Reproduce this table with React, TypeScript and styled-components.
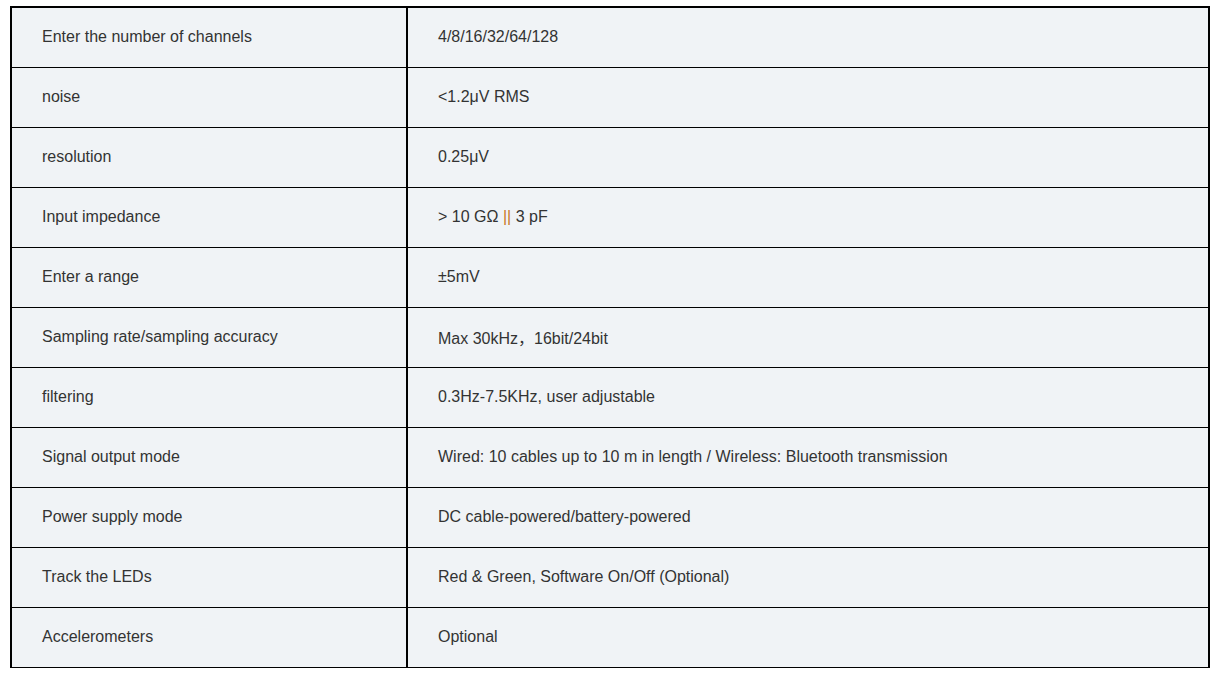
import React from "react";
import styled, { createGlobalStyle } from "styled-components";

const GlobalStyle = createGlobalStyle`
  body {
    margin: 0;
    background: #ffffff;
    font-family: "Liberation Sans", Arial, "Noto Sans CJK SC", sans-serif;
  }
`;

const Page = styled.div`
  padding: 6px 0 0 10px;
`;

const SpecTable = styled.div`
  box-sizing: border-box;
  width: 1200px;
  display: grid;
  grid-template-columns: 396px 1fr;
  background: #f0f3f6;
  border-top: 2px solid #000;
  border-left: 2px solid #000;
  border-right: 2px solid #000;
`;

const Cell = styled.div<{ first?: boolean }>`
  box-sizing: border-box;
  height: 60px;
  display: flex;
  align-items: center;
  padding: 0 0 2px 30px;
  border-bottom: 1px solid #000;
  border-right: ${(props) => (props.first ? "2px solid #000" : "none")};
  color: #333333;
  font-size: 16px;
  white-space: pre;
`;

const Bars = styled.span`
  color: #c8781e;
`;

const rows: [string, React.ReactNode][] = [
  ["Enter the number of channels", "4/8/16/32/64/128"],
  ["noise", "<1.2μV RMS"],
  ["resolution", "0.25μV"],
  [
    "Input impedance",
    <>
      {"> 10 GΩ "}
      <Bars>||</Bars>
      {" 3 pF"}
    </>,
  ],
  ["Enter a range", "±5mV"],
  ["Sampling rate/sampling accuracy", "Max 30kHz，16bit/24bit"],
  ["filtering", "0.3Hz-7.5KHz, user adjustable"],
  ["Signal output mode", "Wired: 10 cables up to 10 m in length / Wireless: Bluetooth transmission"],
  ["Power supply mode", "DC cable-powered/battery-powered"],
  ["Track the LEDs", "Red & Green, Software On/Off (Optional)"],
  ["Accelerometers", "Optional"],
];

const App: React.FunctionComponent = () => {
  return (
    <Page>
      <GlobalStyle />
      <SpecTable>
        {rows.map(([label, value]) => (
          <React.Fragment key={label}>
            <Cell first>{label}</Cell>
            <Cell>{value}</Cell>
          </React.Fragment>
        ))}
      </SpecTable>
    </Page>
  );
};

export default App;
